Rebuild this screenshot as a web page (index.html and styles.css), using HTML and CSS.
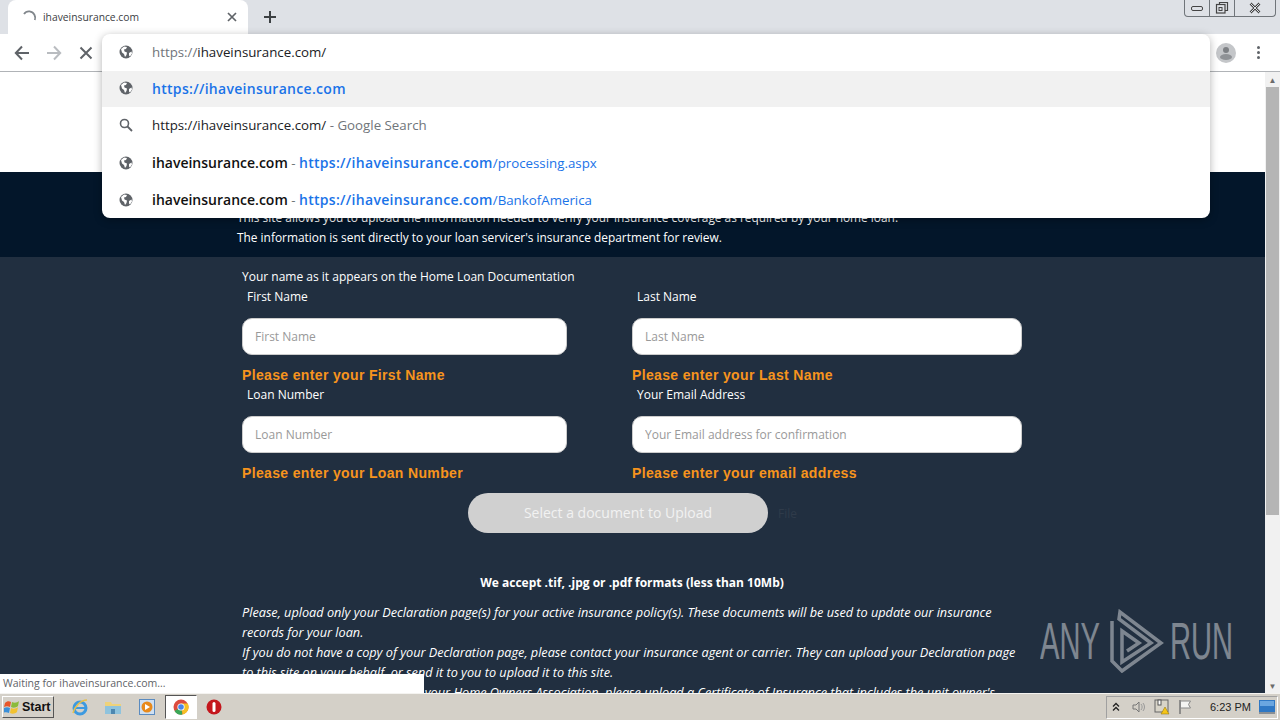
FILE: index.html
```html
<!DOCTYPE html>
<html lang="en">

<head>
    <meta charset="UTF-8" />
    <title>ihaveinsurance.com</title>
    <link rel="stylesheet" href="styles.css">
</head>

<body>
    <svg class="defs" width="0" height="0">
        <symbol id="globe" viewBox="0 0 14 14">
            <circle cx="7" cy="7" r="6.5" fill="#5f6368" />
            <path d="M2 4l3-2.5 3 .5-1 2-2 .5.5 2 2.500 1-.5 2.500-1.500 2-1-3-2-1.500zM10 8l2.500-1.500.5 2-2 3-1-1z" fill="#fff" />
        </symbol>
    </svg>

    <!-- browser top -->
    <div class="tabstrip">
        <div class="tab">
            <svg class="spinner" width="16" height="16" viewBox="0 0 16 16"><path d="M3 5a6 6 0 0 1 10.500 1 6 6 0 0 1 .3 5" fill="none" stroke="#80868b" stroke-width="1.800" /></svg>
            <span class="tab-title">ihaveinsurance.com</span>
            <svg class="tab-close" width="10" height="10" viewBox="0 0 10 10"><path d="M1 1l8 8M9 1l-8 8" stroke="#5f6368" stroke-width="1.700" /></svg>
        </div>
        <svg class="new-tab" width="14" height="14" viewBox="0 0 14 14"><path d="M7 1v12M1 7h12" stroke="#3c4043" stroke-width="2" /></svg>
        <div class="win-buttons">
            <div class="win-btn"><svg width="14" height="8" viewBox="0 0 14 8"><rect x="1.500" y="2.500" width="11" height="4" rx="1.500" fill="none" stroke="#444" /></svg></div>
            <div class="win-btn"><svg width="14" height="14" viewBox="0 0 14 14"><path d="M4.500 3.500v-2h8v8h-2.500" fill="none" stroke="#444" stroke-width="1.200" /><rect x="1.500" y="3.500" width="8.500" height="8.500" fill="none" stroke="#444" stroke-width="1.200" /><rect x="4" y="6.500" width="3" height="3" fill="none" stroke="#444" /></svg></div>
            <div class="win-btn wide"><svg width="12" height="12" viewBox="0 0 12 12"><path d="M1.500 1.500l9 9M10.500 1.500l-9 9" stroke="#444" stroke-width="2.600" /><path d="M1.500 1.500l9 9M10.500 1.500l-9 9" stroke="#dee1e6" stroke-width="1" /></svg></div>
        </div>
    </div>

    <div class="toolbar">
        <svg class="nav-icon" width="16" height="16" viewBox="0 0 16 16"><path d="M15 8H2M8 1.500L1.800 8 8 14.500" fill="none" stroke="#5f6368" stroke-width="2" /></svg>
        <svg class="nav-icon" width="16" height="16" viewBox="0 0 16 16"><path d="M1 8h13M8 1.500L14.200 8 8 14.500" fill="none" stroke="#b9bcc0" stroke-width="2" /></svg>
        <svg class="nav-icon stop" width="14" height="14" viewBox="0 0 14 14"><path d="M1.500 1.500l11 11M12.500 1.500l-11 11" stroke="#5f6368" stroke-width="2" /></svg>
        <div class="toolbar-space"></div>
        <svg class="avatar" width="20" height="20" viewBox="0 0 20 20"><circle cx="10" cy="10" r="10" fill="#c4c6c9" /><circle cx="10" cy="7" r="3" fill="#7d8084" /><ellipse cx="10" cy="14" rx="6" ry="3" fill="#8f9296" /></svg>
        <div class="menu-dots"><span></span><span></span><span></span></div>
    </div>

    <!-- page inside the browser -->
    <div class="viewport">
        <div class="page">
            <div class="white-head"></div>
            <div class="dark-head">
                <div class="dark-head-text">
                    <p>This site allows you to upload the information needed to verify your insurance coverage as required by your home loan.</p>
                    <p>The information is sent directly to your loan servicer's insurance department for review.</p>
                </div>
            </div>
            <div class="form-area">
                <div class="form-wrap">
                    <p class="form-intro">Your name as it appears on the Home Loan Documentation</p>
                    <div class="form-grid">
                        <div class="field">
                            <label>First Name</label>
                            <input type="text" placeholder="First Name">
                            <div class="error">Please enter your First Name</div>
                        </div>
                        <div class="field">
                            <label>Last Name</label>
                            <input type="text" placeholder="Last Name">
                            <div class="error">Please enter your Last Name</div>
                        </div>
                        <div class="field">
                            <label>Loan Number</label>
                            <input type="text" placeholder="Loan Number">
                            <div class="error">Please enter your Loan Number</div>
                        </div>
                        <div class="field">
                            <label>Your Email Address</label>
                            <input type="text" placeholder="Your Email address for confirmation">
                            <div class="error">Please enter your email address</div>
                        </div>
                    </div>
                    <div class="upload-row">
                        <div class="upload-btn">Select a document to Upload</div>
                        <span class="file-label">File</span>
                    </div>
                    <h4 class="formats">We accept .tif, .jpg or .pdf formats (less than 10Mb)</h4>
                    <p class="note">Please, upload only your Declaration page(s) for your active insurance policy(s). These documents will be used to update our insurance records for your loan.</p>
                    <p class="note">If you do not have a copy of your Declaration page, please contact your insurance agent or carrier. They can upload your Declaration page to this site on your behalf, or send it to you to upload it to this site.</p>
                    <p class="note">If you own a condo unit, contact your Home Owners Association, please upload a Certificate of Insurance that includes the unit owner's</p>
                </div>
            </div>
        </div>
        <div class="scrollbar">
            <div class="scroll-arrow">&#9650;</div>
            <div class="scroll-track"><div class="scroll-thumb"></div></div>
            <div class="scroll-arrow">&#9660;</div>
        </div>

        <div class="status-bubble">Waiting for ihaveinsurance.com...</div>

        <div class="watermark">
            <span>ANY</span>
            <svg width="60" height="64" viewBox="0 0 60 64"><path d="M7 12V52l10 10L56 34 15 3l-1 7 32 24-29 19V22l17 12-12 8" fill="none" stroke="#fff" stroke-width="3.500" /></svg>
            <span>RUN</span>
        </div>
    </div>

    <!-- address bar dropdown -->
    <div class="omnibox">
        <div class="omni-row input-row">
            <svg class="omni-icon"><use href="#globe" /></svg>
            <span><span class="dim">https://</span>ihaveinsurance.com/</span>
        </div>
        <div class="omni-row selected">
            <svg class="omni-icon"><use href="#globe" /></svg>
            <span class="link strong">https://ihaveinsurance.com</span>
        </div>
        <div class="omni-row search-row">
            <svg class="omni-icon" viewBox="0 0 14 14"><circle cx="5.500" cy="5.500" r="4" fill="none" stroke="#5f6368" stroke-width="1.600" /><path d="M8.500 8.500l4.500 4.500" stroke="#5f6368" stroke-width="1.800" /></svg>
            <span>https://ihaveinsurance.com/ <span class="dim">- Google Search</span></span>
        </div>
        <div class="omni-row">
            <svg class="omni-icon"><use href="#globe" /></svg>
            <span><span class="strong dark">ihaveinsurance.com</span> <span class="dim">-</span> <span class="link strong">https://ihaveinsurance.com</span><span class="link">/processing.aspx</span></span>
        </div>
        <div class="omni-row">
            <svg class="omni-icon"><use href="#globe" /></svg>
            <span><span class="strong dark">ihaveinsurance.com</span> <span class="dim">-</span> <span class="link strong">https://ihaveinsurance.com</span><span class="link">/BankofAmerica</span></span>
        </div>
    </div>

    <!-- windows taskbar -->
    <div class="taskbar">
        <div class="start-btn">
            <svg width="17" height="16" viewBox="0 0 17 16"><path d="M1 4c2-2 4-2 6-1L6 8C4 7 2 7 0 8z" fill="#e8562a" /><path d="M8 3c2 1 5 1 7-1l-1 5c-2 2-5 2-7 1z" fill="#8bbb3a" /><path d="M0 9c2-1 4-1 6 0l-1 5c-2-1-4-1-6 0z" fill="#3a8fd8" /><path d="M7 9c2 1 5 1 7-1l-1 5c-2 2-5 2-7 1z" fill="#f2c230" /></svg>
            <span>Start</span>
        </div>
        <div class="task-icon">
            <svg width="18" height="18" viewBox="0 0 18 18"><circle cx="9" cy="10" r="6" fill="none" stroke="#3d9ae0" stroke-width="3" /><path d="M4 10h10" stroke="#3d9ae0" stroke-width="2" /><path d="M2 15C4 8 10 2 16 2" fill="none" stroke="#e8c04a" stroke-width="1.500" /></svg>
        </div>
        <div class="task-icon tight">
            <svg width="18" height="16" viewBox="0 0 18 16"><path d="M1 3h6l1 2h9v10H1z" fill="#efd27a" /><rect x="1" y="7" width="16" height="8" fill="#8fc3dd" /><rect x="7" y="10" width="4" height="5" fill="#4d87b0" /></svg>
        </div>
        <div class="task-icon">
            <svg width="16" height="16" viewBox="0 0 16 16"><rect x=".500" y=".500" width="15" height="15" fill="#cfe0f2" stroke="#5a8bc0" /><circle cx="8" cy="8" r="5.500" fill="#e88a1c" /><path d="M6 5l5 3-5 3z" fill="#fff" /></svg>
        </div>
        <div class="task-icon active">
            <svg width="16" height="16" viewBox="0 0 16 16"><circle cx="8" cy="8" r="7.500" fill="#dd4b3e" /><path d="M8 8L1.500 12a7.500 7.500 0 0 0 8 3.400z" fill="#3aa757" /><path d="M8 4.500h6.800a7.500 7.500 0 0 1-5.300 10.900z" fill="#f6c026" /><circle cx="8" cy="8" r="3.600" fill="#fff" /><circle cx="8" cy="8" r="2.800" fill="#4a85e8" /></svg>
        </div>
        <div class="task-icon tight">
            <svg width="16" height="16" viewBox="0 0 16 16"><circle cx="8" cy="8" r="7.500" fill="#c4161c" /><rect x="6.500" y="3" width="3" height="10" rx="1.500" fill="#fff" /></svg>
        </div>
        <div class="tray">
            <svg class="tray-chevron" width="8" height="10" viewBox="0 0 8 10"><path d="M1 4.500l3-3 3 3M1 8.500l3-3 3 3" fill="none" stroke="#222" stroke-width="1.300" /></svg>
            <svg width="16" height="16" viewBox="0 0 16 16"><path d="M2 6h3l3-3v10l-3-3H2z" fill="none" stroke="#777" /><path d="M10 5c1.500 2 1.500 4 0 6M12 4c2 2.500 2 5.500 0 8" fill="none" stroke="#999" /></svg>
            <svg width="16" height="16" viewBox="0 0 16 16"><rect x="1" y="1" width="13" height="12" fill="#d8d4c8" stroke="#666" /><rect x="4" y="1" width="3" height="5" fill="#fff" stroke="#555" /><path d="M11 8l4 7H7z" fill="#f5c518" stroke="#8a6d00" stroke-width=".5" /></svg>
            <svg width="16" height="16" viewBox="0 0 16 16"><path d="M3 1v14" stroke="#777" stroke-width="1.500" /><path d="M3.500 2h10l-2 3.500 2 3.500h-10z" fill="#f4f4f2" stroke="#888" /></svg>
            <span class="clock">6:23 PM</span>
            <svg class="show-desktop" width="16" height="14" viewBox="0 0 16 14"><rect width="16" height="12" fill="#2f78c4" /><rect x="1" y="1" width="14" height="5" fill="#6aa6e0" /><rect y="12" width="16" height="2" fill="#8a8f94" /></svg>
        </div>
    </div>
</body>

</html>
```

FILE: styles.css
```css
* {
    box-sizing: border-box;
}

html,
body {
    margin: 0;
    height: 720px;
    overflow: hidden;
}

body {
    display: flex;
    flex-direction: column;
    position: relative;
    font-family: "Open Sans", sans-serif;
    background-color: #fff;
}

p {
    margin: 0;
}

.defs {
    position: absolute;
}

/* tab strip */
.tabstrip {
    height: 34px;
    flex: none;
    display: flex;
    align-items: flex-start;
    background-color: #dee1e6;
    padding-left: 8px;
}

.tab {
    width: 240px;
    height: 34px;
    display: flex;
    align-items: center;
    padding: 0 11px 0 13px;
    background-color: #fff;
    border-radius: 8px 8px 0 0;
}

.tab-title {
    flex: 1;
    margin-left: 6px;
    font-size: 10.300px;
    color: #3c4043;
}

.new-tab {
    margin: 10px 0 0 15px;
}

.win-buttons {
    margin-left: auto;
    margin-right: 4px;
    width: 92px;
    height: 17px;
    display: flex;
    border: 1px solid #70757a;
    border-top: none;
    border-radius: 0 0 4px 4px;
}

.win-btn {
    flex: 1;
    display: flex;
    align-items: center;
    justify-content: center;
    border-right: 1px solid #70757a;
}

.win-btn.wide {
    flex: 1.700;
    border-right: none;
}

/* toolbar */
.toolbar {
    height: 38px;
    flex: none;
    display: flex;
    align-items: center;
    padding: 0 20px 0 14px;
    gap: 16px;
    background-color: #fff;
    border-bottom: 1px solid #b0b3b7;
}

.nav-icon.stop {
    margin-left: 1px;
}

.toolbar-space {
    flex: 1;
}

.avatar {
    margin-right: -1px;
}

.menu-dots {
    display: flex;
    flex-direction: column;
    gap: 2px;
    margin-left: 6px;
}

.menu-dots span {
    width: 3px;
    height: 3px;
    background-color: #5f6368;
    border-radius: 50%;
}

/* page */
.viewport {
    flex: 1;
    min-height: 0;
    display: flex;
    position: relative;
    overflow: hidden;
    background-color: #212f40;
}

.page {
    flex: 1;
    min-width: 0;
    overflow: hidden;
}

.white-head {
    height: 100px;
    background-color: #fff;
}

.dark-head {
    height: 85px;
    background-color: #03162a;
    padding: 35px 0 0 237px;
    color: #fff;
    font-size: 11.900px;
    line-height: 20px;
}

.form-area {
    color: #fff;
    font-size: 12px;
}

.form-wrap {
    width: 780px;
    margin-left: 242px;
    padding-top: 10px;
}

.form-intro {
    line-height: 20px;
}

.form-grid {
    display: grid;
    grid-template-columns: 325px 390px;
    column-gap: 65px;
}

.field {
    height: 98px;
}

.field label {
    display: block;
    padding-left: 5px;
    line-height: 20px;
}

.field input {
    display: block;
    width: 100%;
    height: 37px;
    margin-top: 11px;
    padding: 0 12px;
    border: 1px solid #ccc;
    border-radius: 10px;
    background-color: #fff;
    font-family: inherit;
    font-size: 12px;
}

.field input::placeholder {
    color: #999;
}

.error {
    margin-top: 12px;
    font-family: "Liberation Sans", sans-serif;
    font-size: 14px;
    font-weight: bold;
    letter-spacing: 0.350px;
    line-height: 16px;
    color: #f7941d;
}

.upload-row {
    display: flex;
    align-items: center;
    margin: 10px 0 0 226px;
}

.upload-btn {
    width: 300px;
    height: 40px;
    line-height: 40px;
    text-align: center;
    border-radius: 20px;
    background-color: #d0d0d0;
    font-size: 14px;
    color: #f2f2f2;
}

.file-label {
    margin-left: 10px;
    color: #2f3b4a;
}

.formats {
    margin: 40px 0 0;
    text-align: center;
    font-size: 12px;
    line-height: 20px;
    font-weight: bold;
}

.note {
    margin-top: 0;
    font-style: italic;
    font-size: 12.700px;
    line-height: 20px;
}

.formats + .note {
    margin-top: 9px;
}

/* scrollbar */
.scrollbar {
    width: 15px;
    flex: none;
    display: flex;
    flex-direction: column;
    background-color: #f1f1f1;
}

.scroll-arrow {
    height: 15px;
    font-size: 8px;
    line-height: 15px;
    text-align: center;
    color: #6b6b6b;
}

.scroll-track {
    flex: 1;
    padding: 0 1px;
}

.scroll-thumb {
    height: 428px;
    background-color: #b5b5b5;
}

/* overlays */
.status-bubble {
    position: absolute;
    left: 0;
    bottom: 0;
    width: 424px;
    height: 19px;
    padding-left: 3px;
    line-height: 19px;
    background-color: #fff;
    font-size: 10.500px;
    color: #5f6368;
}

.watermark {
    position: absolute;
    right: 49px;
    top: 537px;
    display: flex;
    align-items: center;
    gap: 4px;
    opacity: 0.42;
    font-family: "Liberation Sans", sans-serif;
    font-size: 52px;
    color: #fff;
}

.watermark span {
    display: inline-block;
    width: 61px;
    transform: scaleX(0.56);
    transform-origin: left center;
    white-space: nowrap;
}

.watermark svg {
    margin-right: 1px;
}

.omnibox {
    position: absolute;
    left: 102px;
    top: 34px;
    width: 1108px;
    height: 184px;
    background-color: #fff;
    border-radius: 8px;
    box-shadow: 0 2px 8px rgba(0, 0, 0, 0.3);
    font-size: 13.300px;
    color: #202124;
}

.omni-row {
    height: 37px;
    display: flex;
    align-items: center;
    padding-left: 17px;
}

.omni-row.input-row,
.omni-row.search-row {
    padding-bottom: 1px;
}

.omni-row.selected {
    height: 36px;
    padding-bottom: 2px;
    background-color: #f1f1f1;
}

.omni-icon {
    width: 14px;
    height: 14px;
    margin-right: 19px;
    flex: none;
}

.dim {
    color: #70757a;
}

.link {
    color: #1a73e8;
}

.strong {
    font-size: 14px;
    font-weight: 600;
}

.link.strong {
    letter-spacing: 0.300px;
}

.strong.dark {
    color: #111;
}

/* taskbar */
.taskbar {
    height: 27px;
    flex: none;
    display: flex;
    align-items: center;
    background-color: #d4d0c8;
    border-top: 1px solid #f4f3f0;
    padding-left: 2px;
}

.start-btn {
    width: 52px;
    height: 22px;
    display: flex;
    align-items: center;
    gap: 1px;
    padding-left: 1px;
    margin-right: 10px;
    border: 1px solid #fff;
    border-right-color: #555;
    border-bottom-color: #555;
    font-family: "Liberation Sans", sans-serif;
    font-size: 12.500px;
    font-weight: bold;
    color: #111;
}

.task-icon {
    width: 32px;
    height: 24px;
    display: flex;
    align-items: center;
    justify-content: center;
    margin-right: 2px;
}

.task-icon.tight {
    margin-left: -1px;
}

.task-icon.active {
    background-color: #fff;
    border: 1px solid #555;
    border-right-color: #fff;
    border-bottom-color: #fff;
}

.tray {
    margin-left: auto;
    width: 172px;
    height: 23px;
    display: flex;
    align-items: center;
    gap: 7px;
    padding-left: 5px;
    border: 1px solid #a0a0a0;
    border-right-color: #fff;
    border-bottom-color: #fff;
    margin-right: 2px;
}

.tray-chevron {
    margin-right: 4px;
}

.clock {
    margin-left: 10px;
    font-family: "Liberation Sans", sans-serif;
    font-size: 11px;
    white-space: nowrap;
    color: #222;
}

.show-desktop {
    margin-left: auto;
    margin-right: 2px;
}
```
